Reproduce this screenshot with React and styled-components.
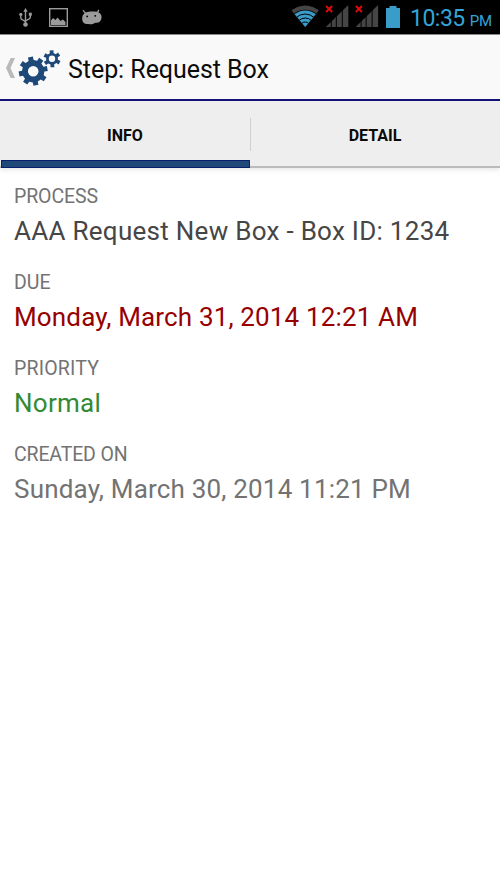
import React from 'react';
import styled, { createGlobalStyle } from 'styled-components';

const GlobalStyle = createGlobalStyle`
  body {
    margin: 0;
    background: #fff;
    font-family: Roboto, sans-serif;
  }
`;

const Screen = styled.div`
  display: flex;
  flex-direction: column;
  height: 889px;
  width: 500px;
  overflow: hidden;
  background: #fff;
`;

const StatusBar = styled.div`
  display: flex;
  justify-content: space-between;
  height: 35px;
  background: #000;
  border-bottom: 1px solid #8a8788;
  box-sizing: border-box;
`;

const StatusIcons = styled.svg`
  display: block;
  flex: none;
  height: 33px;
  width: ${(props) => props.$width}px;
`;

const StatusRight = styled.div`
  display: flex;
`;

const Clock = styled.div`
  display: flex;
  align-items: baseline;
  width: 94px;
  padding-left: 4px;
  box-sizing: border-box;
  color: #33a5d8;
  font-size: 23px;
  line-height: 37px;
  letter-spacing: -0.5px;
  white-space: nowrap;
`;

const Meridiem = styled.span`
  margin-left: 5px;
  font-size: 15px;
  letter-spacing: -0.2px;
`;

const ActionBar = styled.header`
  display: flex;
  align-items: center;
  height: 66px;
  background: #f9f9f9;
  border-bottom: 2px solid #12127a;
  box-sizing: border-box;
`;

const Logo = styled.svg`
  display: block;
  flex: none;
  width: 68px;
  height: 64px;
`;

const Title = styled.h1`
  margin: 6px 0 0;
  color: #0c0c0c;
  font-size: 25px;
  font-weight: 400;
  line-height: 32px;
  letter-spacing: -0.05px;
  white-space: nowrap;
`;

const Tabs = styled.nav`
  display: flex;
  height: 67px;
  background: #eee;
  border-bottom: 2px solid #bbb;
  box-shadow: 0 2px 5px rgba(0, 0, 0, 0.09);
  box-sizing: border-box;
`;

const Tab = styled.button`
  position: relative;
  flex: 1;
  height: 67px;
  padding: 1px 0 0;
  border: none;
  background: none;
  color: #0a0a0a;
  font-family: inherit;
  font-size: 16px;
  font-weight: 700;
  cursor: pointer;
`;

const Indicator = styled.span`
  position: absolute;
  left: 1px;
  right: 0;
  bottom: 0;
  height: 8px;
  border: 1px solid #0a1f70;
  background: #1d4877;
  box-sizing: border-box;
`;

const Divider = styled.span`
  flex: none;
  width: 1px;
  height: 33px;
  margin: 17px -1px 0 0;
  background: #d0d0d0;
`;

const Details = styled.dl`
  margin: 0;
  padding: 16px 14px 0;
`;

const Field = styled.div`
  height: 86px;
`;

const Label = styled.dt`
  color: #737373;
  font-size: 19.5px;
  line-height: 26px;
  letter-spacing: ${(props) => props.$spacing}px;
`;

const Value = styled.dd`
  margin: 4px 0 0;
  color: ${(props) => props.$color};
  font-size: 26px;
  line-height: 34px;
  letter-spacing: ${(props) => props.$spacing}px;
  white-space: nowrap;
`;

const fields = [
  { label: 'PROCESS', value: 'AAA Request New Box - Box ID: 1234', color: '#464646', labelSpacing: -0.1, spacing: 0.28 },
  { label: 'DUE', value: 'Monday, March 31, 2014 12:21 AM', color: '#960000', labelSpacing: 0, spacing: 0.15 },
  { label: 'PRIORITY', value: 'Normal', color: '#338a33', labelSpacing: 0.2, spacing: 0.25 },
  { label: 'CREATED ON', value: 'Sunday, March 30, 2014 11:21 PM', color: '#737373', labelSpacing: -0.15, spacing: 0.19 },
];

// outline of a gear, with the hole cut out by the even-odd rule
function gearPath(cx, cy, outer, inner, hole, teeth, turn) {
  const step = 360 / teeth;
  const points = [];
  const at = (r, deg) => {
    const a = (deg * Math.PI) / 180;
    return `${(cx + r * Math.cos(a)).toFixed(2)} ${(cy + r * Math.sin(a)).toFixed(2)}`;
  };
  for (let i = 0; i < teeth; i += 1) {
    const mid = turn + i * step;
    points.push(at(inner, mid - step * 0.29), at(outer, mid - step * 0.22));
    points.push(at(outer, mid + step * 0.22), at(inner, mid + step * 0.29));
  }
  return `M${points.join('L')}Z M${cx - hole} ${cy}a${hole} ${hole} 0 1 0 ${hole * 2} 0a${hole} ${hole} 0 1 0 ${-hole * 2} 0Z`;
}

function Notifications() {
  return (
    <StatusIcons $width={110} viewBox="0 0 110 33">
      <g fill="none" stroke="#9b9b9b" strokeWidth="1.4">
        <path d="M25.5 11V24M20.8 14.5v3.2q0 1.2 1.2 1.8l3.5 2.2M30.3 14v3q0 1.2-1.2 1.8l-3.6 2.2" />
        <rect x="49.7" y="8.7" width="17.6" height="17.6" />
      </g>
      <g fill="#9b9b9b">
        <path d="M25.5 8l2.2 3.8h-4.4z" />
        <circle cx="25.5" cy="24.5" r="2.3" />
        <circle cx="20.8" cy="14.4" r="1.6" />
        <rect x="28.8" y="12.7" width="3" height="3" />
        <path d="M51 25v-4.500l2-2.500 2.500 2 2-2.500 3 3.500 2.500-1.500 2.500 2.500v3z" />
        <path d="M84.5 13.2l-2-2.8.8-.6 2.5 2.6c2.8-1 7-1.3 11.2-.6l1.3-2.2 1 .4-.8 2.5c2.6 1.1 3.3 3.3 3 5.500-.3 3.600-2.900 5.300-6 4.700-1.800 1.300-4.400 1.900-7 1.200-3.300.9-6.300-1-6.300-4.600-.2-2.500.6-4.800 2.300-6.100z" />
      </g>
      <circle cx="87.2" cy="16.4" r="0.9" fill="#000" />
      <circle cx="95.2" cy="15.8" r="0.9" fill="#000" />
    </StatusIcons>
  );
}

function Signal({ x }) {
  return (
    <g transform={`translate(${x} 0)`}>
      <path d="M0 27L22.5 5V27Z" fill="#454545" />
      <path d="M5.5 20V27M10.5 15V27M16.5 9V27" stroke="#000" strokeWidth="1" />
      <path d="M0.3 6l6 6M6.3 6l-6 6" stroke="#e00c0c" strokeWidth="1.9" />
    </g>
  );
}

function Connectivity() {
  return (
    <StatusIcons $width={122} viewBox="284 0 122 33">
      <clipPath id="wedge">
        <path d="M305.2 27L288 6.3V0H322.4V6.3Z" />
      </clipPath>
      <g clipPath="url(#wedge)">
        <circle cx="305.2" cy="27" r="21.5" fill="#454545" />
        <circle cx="305.2" cy="27" r="17.3" fill="#000" />
        <circle cx="305.2" cy="27" r="16.5" fill="#3a9cc8" />
        <g fill="none" stroke="#000" strokeWidth="1">
          <circle cx="305.2" cy="27" r="13" />
          <circle cx="305.2" cy="27" r="9" />
          <circle cx="305.2" cy="27" r="5" />
        </g>
      </g>
      <Signal x={325.8} />
      <Signal x={355.6} />
      <path d="M386 8h3.5V6h7v2h3.5v20H386z" fill="#3a9cc8" />
    </StatusIcons>
  );
}

export default function App() {
  return (
    <>
      <GlobalStyle />
      <Screen>
        <StatusBar>
          <Notifications />
          <StatusRight>
            <Connectivity />
            <Clock>
              10:35
              <Meridiem>PM</Meridiem>
            </Clock>
          </StatusRight>
        </StatusBar>
        <ActionBar>
          <Logo viewBox="0 35 68 64">
            <path d="M10.7 58H15L10.5 68L15 78H10.7L6 68Z" fill="#b9b9b9" />
            <g fill="#1d4877" fillRule="evenodd">
              <path d={gearPath(33.2, 71.2, 14.6, 11.2, 5.3, 8, -11)} />
              <path d={gearPath(52, 58.8, 8.7, 6, 3.2, 6, -93)} />
            </g>
          </Logo>
          <Title>Step: Request Box</Title>
        </ActionBar>
        <Tabs>
          <Tab type="button">
            INFO
            <Indicator />
          </Tab>
          <Divider />
          <Tab type="button">DETAIL</Tab>
        </Tabs>
        <Details>
          {fields.map((field) => (
            <Field key={field.label}>
              <Label $spacing={field.labelSpacing}>{field.label}</Label>
              <Value $color={field.color} $spacing={field.spacing}>{field.value}</Value>
            </Field>
          ))}
        </Details>
      </Screen>
    </>
  );
}
